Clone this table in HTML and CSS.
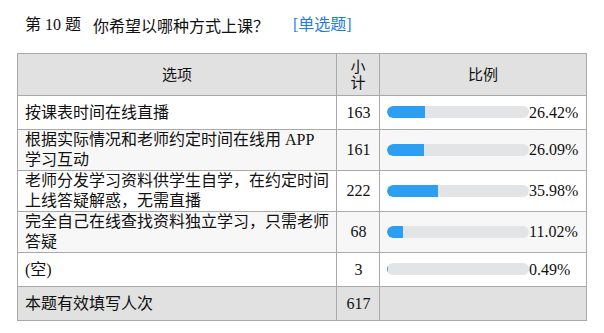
FILE: index.html
```html
<!DOCTYPE html>
<html lang="zh-CN">
<head>
<meta charset="utf-8">
<link rel="stylesheet" href="styles.css">
</head>
<body>
<div class="title">
  <span class="qno">第 10 题</span>
  <span class="qtext">你希望以哪种方式上课？</span>
  <span class="qtype">[单选题]</span>
</div>
<table class="result">
  <colgroup>
    <col class="c-opt">
    <col class="c-cnt">
    <col class="c-pct">
  </colgroup>
  <thead>
    <tr class="head">
      <th>选项</th>
      <th class="narrow">小计</th>
      <th>比例</th>
    </tr>
  </thead>
  <tbody>
    <tr>
      <td class="opt">按课表时间在线直播</td>
      <td class="cnt">163</td>
      <td class="pct"><span class="bar"><span class="fill" style="width:26.42%"></span></span><span class="num">26.42%</span></td>
    </tr>
    <tr class="alt">
      <td class="opt">根据实际情况和老师约定时间在线用 APP 学习互动</td>
      <td class="cnt">161</td>
      <td class="pct"><span class="bar"><span class="fill" style="width:26.09%"></span></span><span class="num">26.09%</span></td>
    </tr>
    <tr>
      <td class="opt">老师分发学习资料供学生自学，在约定时间上线答疑解惑，无需直播</td>
      <td class="cnt">222</td>
      <td class="pct"><span class="bar"><span class="fill" style="width:35.98%"></span></span><span class="num">35.98%</span></td>
    </tr>
    <tr class="alt">
      <td class="opt">完全自己在线查找资料独立学习，只需老师答疑</td>
      <td class="cnt">68</td>
      <td class="pct"><span class="bar"><span class="fill" style="width:11.02%"></span></span><span class="num">11.02%</span></td>
    </tr>
    <tr>
      <td class="opt">(空)</td>
      <td class="cnt">3</td>
      <td class="pct"><span class="bar"><span class="fill" style="width:0.49%"></span></span><span class="num">0.49%</span></td>
    </tr>
    <tr class="total">
      <td class="opt">本题有效填写人次</td>
      <td class="cnt">617</td>
      <td class="pct"></td>
    </tr>
  </tbody>
</table>
</body>
</html>
```
FILE: styles.css
```css
html, body {
  margin: 0;
  padding: 0;
  background: #ffffff;
}

body {
  font-family: "Liberation Serif", "Noto Sans CJK SC", serif;
  font-size: 16px;
  color: #111111;
}

.title {
  display: flex;
  align-items: center;
  height: 20px;
  line-height: 20px;
  padding: 15px 0 0 25px;
}

.qno {
  margin-right: 12px;
}

.qtext {
  margin-right: 24px;
  font-family: "Noto Sans CJK SC", sans-serif;
}

.qtype {
  color: #1e7ce8;
}

.result {
  margin: 18px 0 0 17px;
  border-collapse: collapse;
  table-layout: fixed;
  width: 569px;
}

.c-opt { width: 319px; }
.c-cnt { width: 43px; }
.c-pct { width: 207px; }

.result th,
.result td {
  border: 1px solid #a9a9a9;
  vertical-align: middle;
}

.result th {
  background: #e1e1e1;
  font-weight: normal;
  font-size: 15px;
  line-height: 16px;
  padding: 4px 8px;
  text-align: center;
  height: 33px;
}

.result td {
  line-height: 20px;
  padding: 0 6px 0 7px;
  height: 33px;
}

.result tr.alt td {
  background: #f7f7f7;
}

.result tr.total td {
  background: #e1e1e1;
}

.cnt {
  text-align: center;
}

.pct {
  white-space: nowrap;
}

.bar {
  display: inline-block;
  vertical-align: middle;
  width: 142px;
  height: 12px;
  border-radius: 6px;
  background: #e3e4e6;
  overflow: hidden;
  position: relative;
  top: -1px;
}

.fill {
  display: block;
  height: 100%;
  background: #2c9ff3;
  border-radius: 6px 0 0 6px;
}

.num {
  vertical-align: middle;
}
```
